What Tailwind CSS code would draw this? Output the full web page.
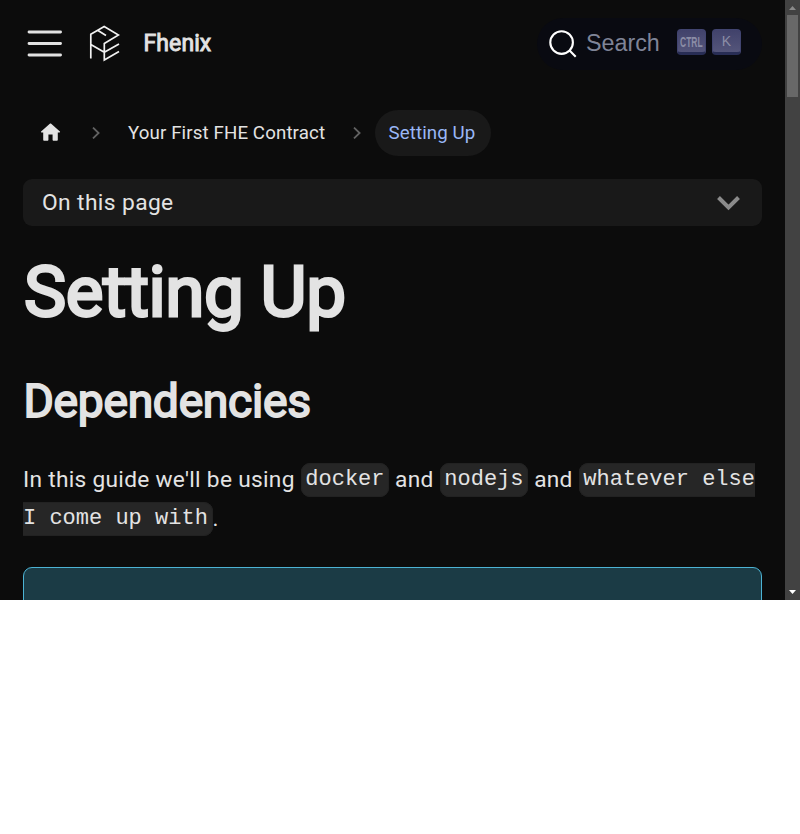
<!DOCTYPE html>
<html lang="en">
<head>
<meta charset="utf-8">
<title>Setting Up | Fhenix</title>
<script src="https://cdn.jsdelivr.net/npm/@tailwindcss/browser@4"></script>
</head>
<body class="bg-white">
<div class="flex h-[600px] w-[800px] overflow-hidden bg-[#0c0c0c] font-['Roboto',sans-serif] text-[#e3e3e3]">
  <div class="w-[785px] shrink-0">
    <header class="flex h-[87px] items-center pl-[23px] pr-[23px]">
      <svg class="h-[43px] w-[43px]" viewBox="0 0 30 30" fill="none" stroke="#e3e3e3" stroke-linecap="round" stroke-width="2"><path d="M4.200 7h22M4.200 15h22M4.200 23h22"/></svg>
      <svg class="mb-[2px] ml-[22px] h-[38px] w-[32px]" viewBox="0 0 32 38" fill="none" stroke="#f1f1f1" stroke-width="1.700"><path d="M2.8 34.500V10.300L16.200 2.500L30.500 11L16.300 19.500V36L31 27.500M2.800 20.500L16.300 28.300L31 20M10 6.500L18 11.500"/></svg>
      <div class="ml-[23.500px] text-[23px] leading-[38px] tracking-[0.1px] [-webkit-text-stroke:0.9px_#e3e3e3]">Fhenix</div>
      <div class="ml-auto flex h-[52px] w-[225px] items-center rounded-full bg-[#090a11] pl-[11px]">
        <svg class="h-[30px] w-[30px]" viewBox="0 0 20 20" fill="none" stroke="#fff" stroke-width="1.4" stroke-linecap="round"><path d="M14.386 14.386l4.088 4.088-4.088-4.088c-2.942 2.942-7.711 2.942-10.653 0s-2.942-7.711 0-10.653 7.711-2.942 10.653 0 2.942 7.711 0 10.653z"/></svg>
        <span class="mb-[2px] ml-[8px] w-[91px] font-['Liberation_Sans',sans-serif] text-[23.300px] leading-[28px] text-[#7f8497]">Search</span>
        <span class="mb-[3px] flex gap-[6px]">
          <kbd class="flex h-[26px] w-[29px] items-center justify-center rounded-[4px] border border-b-[3px] border-[#414470] border-b-[#282d55] bg-linear-to-b from-[#41426b] to-[#54557a] font-['Liberation_Sans',sans-serif] text-[14.500px] font-bold leading-none text-[#8b8da6]"><span class="block scale-x-[.58] pt-[2px]">CTRL</span></kbd>
          <kbd class="flex h-[26px] w-[29px] items-center justify-center rounded-[4px] border border-b-[3px] border-[#414470] border-b-[#282d55] bg-linear-to-b from-[#41426b] to-[#54557a] pb-[1px] font-['Liberation_Sans',sans-serif] text-[14px] leading-none text-[#8b8da6]">K</kbd>
        </span>
      </div>
    </header>
    <main class="px-[23px] pt-[23px]">
      <nav class="flex h-[46px] items-center text-[18.700px] leading-[24px]">
        <svg class="mb-[2px] ml-[15px] h-[25px] w-[25px]" viewBox="0 0 24 24" fill="#e3e3e3"><path d="M10 19v-5h4v5c0 .55.45 1 1 1h3c.55 0 1-.45 1-1v-7h1.700c.46 0 .68-.57.33-.87L12.670 3.600c-.38-.34-.96-.34-1.340 0l-8.360 7.530c-.34.3-.13.87.33.87H5v7c0 .55.45 1 1 1h3c.55 0 1-.45 1-1z"/></svg>
        <svg class="ml-[29px] h-[12px] w-[8px]" viewBox="0 0 8 12" fill="none" stroke="#626262" stroke-width="1.800"><path d="M1 .6L6.600 6L1 11.400"/></svg>
        <span class="ml-[28px] w-[197px] whitespace-nowrap tracking-[0.12px]">Your First FHE Contract</span>
        <svg class="ml-[28px] h-[12px] w-[8px]" viewBox="0 0 8 12" fill="none" stroke="#626262" stroke-width="1.800"><path d="M1 .6L6.600 6L1 11.400"/></svg>
        <span class="ml-[14px] flex h-[46px] w-[116px] items-center whitespace-nowrap rounded-full bg-[#191919] pl-[13.500px] tracking-[0.1px] text-[#9ab7f6]">Setting Up</span>
      </nav>
      <button class="mt-[23px] flex h-[47px] w-full items-center justify-between rounded-[9px] bg-[#191919] pl-[19px] pr-[21px] pt-[2px] text-[22.800px] tracking-[0.38px]">
        <span>On this page</span>
        <svg class="h-[15px] w-[25px]" viewBox="0 0 25 15" fill="none" stroke="#8b8b8b" stroke-width="4"><path d="M2.500 1.500L12.500 11.500L22.500 1.500"/></svg>
      </button>
      <h1 class="ml-px mt-[22px] h-[88px] whitespace-nowrap text-[71px] leading-[87px] tracking-[-0.45px] [-webkit-text-stroke:2.900px_#e3e3e3]">Setting Up</h1>
      <h2 class="ml-[.5px] mt-[36px] h-[58px] whitespace-nowrap text-[46.240px] leading-[58px] tracking-[-0.3px] [-webkit-text-stroke:1.800px_#e3e3e3]">Dependencies</h2>
      <p class="mt-[30px] h-[78px] w-[739px] text-[22.700px] leading-[39px] tracking-[0.3px]">In this guide we'll be using <code class="relative -top-px rounded-[9px] border border-[#222] bg-[#262626] px-[3.700px] pt-[3px] pb-[4px] align-middle font-['Liberation_Mono',monospace] text-[22px] leading-[28px] tracking-normal">docker</code> and <code class="relative -top-px rounded-[9px] border border-[#222] bg-[#262626] px-[3.700px] pt-[3px] pb-[4px] align-middle font-['Liberation_Mono',monospace] text-[22px] leading-[28px] tracking-normal">nodejs</code> and <code class="relative -top-px rounded-[9px] border border-[#222] bg-[#262626] px-[3.700px] pt-[3px] pb-[4px] align-middle font-['Liberation_Mono',monospace] text-[22px] leading-[28px] tracking-normal">whatever else I come up with</code>.</p>
      <div class="mt-[29px] h-[120px] rounded-[9px] border border-[#4cb3d4] bg-[#1b3b45]"></div>
    </main>
  </div>
  <div class="flex h-[600px] w-[15px] flex-col items-center bg-[#424242]">
    <svg class="h-[15px] w-[15px]" viewBox="0 0 15 15" fill="#8a8a8a"><path d="M4 10L7.500 6L11 10z"/></svg>
    <div class="h-[82px] w-[11px] bg-[#686868]"></div>
    <svg class="mt-auto h-[15px] w-[15px]" viewBox="0 0 15 15" fill="#fff"><path d="M4 5L7.500 9L11 5z"/></svg>
  </div>
</div>
</body>
</html>
